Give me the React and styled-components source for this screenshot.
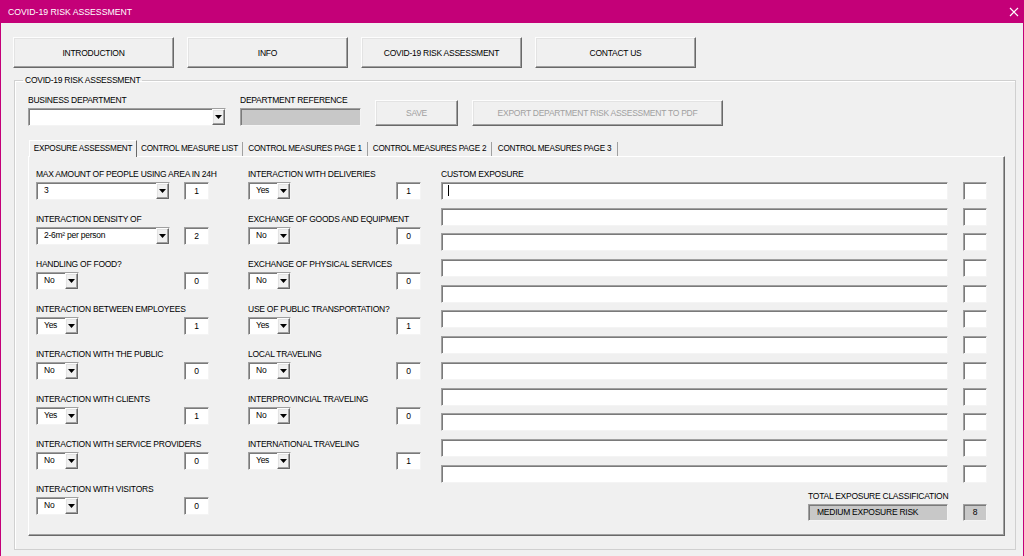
import React from "react";
import styled, { createGlobalStyle } from "styled-components";

const GlobalStyle = createGlobalStyle`
  html, body {
    margin: 0;
    padding: 0;
    background: #f0f0f0;
  }
  body {
    font-family: "Liberation Sans", Arial, sans-serif;
    font-size: 8.5px;
    letter-spacing: -0.25px;
    color: #000;
  }
  * {
    box-sizing: border-box;
  }
`;

const leftFields = [
  { label: "MAX AMOUNT OF PEOPLE USING AREA IN 24H", value: "3", score: "1", wide: true },
  { label: "INTERACTION DENSITY OF", value: "2-6m² per person", score: "2", wide: true },
  { label: "HANDLING OF FOOD?", value: "No", score: "0" },
  { label: "INTERACTION BETWEEN EMPLOYEES", value: "Yes", score: "1" },
  { label: "INTERACTION WITH THE PUBLIC", value: "No", score: "0" },
  { label: "INTERACTION WITH CLIENTS", value: "Yes", score: "1" },
  { label: "INTERACTION WITH SERVICE PROVIDERS", value: "No", score: "0" },
  { label: "INTERACTION WITH VISITORS", value: "No", score: "0" },
];

const midFields = [
  { label: "INTERACTION WITH DELIVERIES", value: "Yes", score: "1" },
  { label: "EXCHANGE OF GOODS AND EQUIPMENT", value: "No", score: "0" },
  { label: "EXCHANGE OF PHYSICAL SERVICES", value: "No", score: "0" },
  { label: "USE OF PUBLIC TRANSPORTATION?", value: "Yes", score: "1" },
  { label: "LOCAL TRAVELING", value: "No", score: "0" },
  { label: "INTERPROVINCIAL TRAVELING", value: "No", score: "0" },
  { label: "INTERNATIONAL TRAVELING", value: "Yes", score: "1" },
];

const tabs = [
  { name: "EXPOSURE ASSESSMENT", width: 108, active: true },
  { name: "CONTROL MEASURE LIST", width: 106 },
  { name: "CONTROL MEASURES PAGE 1", width: 125 },
  { name: "CONTROL MEASURES PAGE 2", width: 124 },
  { name: "CONTROL MEASURES PAGE 3", width: 126 },
];

const navButtons = ["INTRODUCTION", "INFO", "COVID-19 RISK ASSESSMENT", "CONTACT US"];

function Combo({ value, width }) {
  return (
    <ComboBox $width={width}>
      <ComboValue>{value}</ComboValue>
      <DropButton>
        <svg width="7" height="4" viewBox="0 0 7 4">
          <path d="M0 0 H7 L3.5 4 Z" fill="#000" />
        </svg>
      </DropButton>
    </ComboBox>
  );
}

function App() {
  return (
    <Window>
      <GlobalStyle />
      <TitleBar>
        <span>COVID-19 RISK ASSESSMENT</span>
        <svg width="10" height="10" viewBox="0 0 10 10">
          <path d="M1 1 L9 9 M9 1 L1 9" stroke="#fff" strokeWidth="1.2" />
        </svg>
      </TitleBar>
      <Body>
        <NavRow>
          {navButtons.map((b) => (
            <NavButton key={b}>{b}</NavButton>
          ))}
        </NavRow>
        <Group>
          <legend>COVID-19 RISK ASSESSMENT</legend>
          <DeptRow>
            <DeptField $width={198}>
              <Label>BUSINESS DEPARTMENT</Label>
              <Combo value="" width={198} />
            </DeptField>
            <DeptField $width={121}>
              <Label>DEPARTMENT REFERENCE</Label>
              <GreyBox $width={121} />
            </DeptField>
            <ActionButton $width={83} disabled>
              SAVE
            </ActionButton>
            <ActionButton $width={251} disabled>
              EXPORT DEPARTMENT RISK ASSESSMENT TO PDF
            </ActionButton>
          </DeptRow>

          <TabStrip>
            {tabs.map((t) => (
              <Tab key={t.name} $width={t.width} $active={t.active}>
                {t.name}
              </Tab>
            ))}
          </TabStrip>

          <TabPanel>
            <Column $width={173}>
              {leftFields.map((f) => (
                <Field key={f.label}>
                  <Label>{f.label}</Label>
                  <ControlRow>
                    <Combo value={f.value} width={f.wide ? 134 : 43} />
                    <ScoreBox>{f.score}</ScoreBox>
                  </ControlRow>
                </Field>
              ))}
            </Column>
            <Column $width={173}>
              {midFields.map((f) => (
                <Field key={f.label}>
                  <Label>{f.label}</Label>
                  <ControlRow>
                    <Combo value={f.value} width={43} />
                    <ScoreBox>{f.score}</ScoreBox>
                  </ControlRow>
                </Field>
              ))}
            </Column>
            <CustomColumn>
              <Label>CUSTOM EXPOSURE</Label>
              <CustomList>
                {Array.from({ length: 12 }).map((_, i) => (
                  <CustomRow key={i}>
                    <TextBox>{i === 0 && <Caret />}</TextBox>
                    <ScoreBox $width={24} />
                  </CustomRow>
                ))}
              </CustomList>
              <TotalBlock>
                <Label>TOTAL EXPOSURE CLASSIFICATION</Label>
                <TotalRow>
                  <GreyBox $width={140} $height={17}>
                    MEDIUM EXPOSURE RISK
                  </GreyBox>
                  <GreyBox $width={24} $height={17} $center>
                    8
                  </GreyBox>
                </TotalRow>
              </TotalBlock>
            </CustomColumn>
          </TabPanel>
        </Group>
      </Body>
    </Window>
  );
}

const Window = styled.div`
  width: 1024px;
  height: 556px;
  display: flex;
  flex-direction: column;
  background: #f0f0f0;
  border-left: 1px solid #c40078;
  border-right: 1px solid #c40078;
  overflow: hidden;
`;

const TitleBar = styled.div`
  height: 23px;
  flex: 0 0 23px;
  margin: 0 -1px;
  padding: 0 5px 0 8px;
  display: flex;
  align-items: center;
  justify-content: space-between;
  background: #c40078;
  color: #fff;
  font-size: 8.7px;
  letter-spacing: 0;
`;

const Body = styled.div`
  padding: 14px 7px 0 12px;
`;

const NavRow = styled.div`
  display: flex;
  gap: 13px;
`;

const raised = `
  background: #f0f0f0;
  border: 1px solid;
  border-color: #fdfdfd #696969 #696969 #fdfdfd;
  box-shadow: inset -1px -1px 0 #a0a0a0, inset 1px 1px 0 #e3e3e3;
`;

const sunken = `
  border: 1px solid;
  border-color: #a0a0a0 #f4f4f4 #f4f4f4 #a0a0a0;
  box-shadow: inset 1px 1px 0 #7a7a7a;
`;

const NavButton = styled.button`
  ${raised}
  width: 161px;
  height: 31px;
  padding: 0;
  font-family: inherit;
  font-size: 8.5px;
  letter-spacing: -0.25px;
  color: #000;
`;

const Group = styled.fieldset`
  margin: 6px 0 0 1px;
  padding: 0 10px 0 13px;
  height: 476px;
  border: 1px solid #d0d0d0;
  box-shadow: inset 1px 1px 0 #fff;
  min-width: 0;

  legend {
    margin-left: -5px;
    padding: 0 2px;
    line-height: 13px;
    font-size: 8.5px;
    color: #000;
  }
`;

const DeptRow = styled.div`
  margin-top: 7px;
  display: flex;
  align-items: flex-end;
  gap: 14px;
`;

const DeptField = styled.div`
  width: ${(p) => p.$width}px;
  flex: 0 0 auto;
`;

const Label = styled.div`
  height: 13px;
  line-height: 13px;
  font-size: 8.5px;
  white-space: nowrap;
  color: #000;
`;

const ComboBox = styled.div`
  ${sunken}
  width: ${(p) => p.$width}px;
  height: 18px;
  margin-top: 1px;
  display: flex;
  background: #fff;
`;

const ComboValue = styled.div`
  flex: 1;
  padding-left: 7px;
  line-height: 15px;
  font-size: 8.5px;
  white-space: nowrap;
  overflow: hidden;
`;

const DropButton = styled.div`
  ${raised}
  width: 13px;
  height: 16px;
  display: flex;
  align-items: center;
  justify-content: center;
`;

const GreyBox = styled.div`
  ${sunken}
  width: ${(p) => p.$width}px;
  height: ${(p) => p.$height || 18}px;
  margin-top: 1px;
  background: #c8c8c8;
  padding-left: ${(p) => (p.$center ? 0 : 8)}px;
  text-align: ${(p) => (p.$center ? "center" : "left")};
  line-height: 14px;
  font-size: 8.5px;
  white-space: nowrap;
`;

const ActionButton = styled.button`
  ${raised}
  width: ${(p) => p.$width}px;
  flex: 0 0 auto;
  height: 26px;
  padding: 0;
  font-family: inherit;
  font-size: 8.5px;
  letter-spacing: -0.25px;
  color: #a0a0a0;
`;

const TabStrip = styled.div`
  margin-top: 14px;
  height: 16px;
  padding-left: 1px;
  display: flex;
  align-items: flex-end;
`;

const Tab = styled.div`
  position: relative;
  z-index: ${(p) => (p.$active ? 2 : 1)};
  width: ${(p) => p.$width}px;
  height: ${(p) => (p.$active ? 17 : 14)}px;
  margin-bottom: ${(p) => (p.$active ? -1 : 0)}px;
  line-height: 13px;
  padding-top: ${(p) => (p.$active ? 1 : 0)}px;
  text-align: center;
  font-size: 8.2px;
  white-space: nowrap;
  background: #f0f0f0;
  border-top: ${(p) => (p.$active ? "1px solid #fff" : "none")};
  border-left: ${(p) => (p.$active ? "1px solid #fff" : "none")};
  border-right: 1px solid ${(p) => (p.$active ? "#696969" : "#a0a0a0")};
`;

const TabPanel = styled.div`
  position: relative;
  z-index: 1;
  width: 977px;
  height: 380px;
  padding: 11px 0 0 7px;
  display: flex;
  gap: 39px;
  border: 1px solid;
  border-color: #fff #696969 #696969 #fff;
  box-shadow: inset -1px -1px 0 #a0a0a0;
  background: #f0f0f0;
`;

const Column = styled.div`
  width: ${(p) => p.$width}px;
  display: flex;
  flex-direction: column;
`;

const Field = styled.div`
  margin-bottom: 13px;
`;

const ControlRow = styled.div`
  display: flex;
  justify-content: space-between;
  align-items: flex-start;
`;

const ScoreBox = styled.div`
  ${sunken}
  width: ${(p) => p.$width || 25}px;
  height: 18px;
  margin-top: 1px;
  background: #fff;
  text-align: center;
  line-height: 16px;
  font-size: 8.5px;
`;

const CustomColumn = styled.div`
  width: 546px;
  margin-left: -19px;
  display: flex;
  flex-direction: column;
`;

const CustomList = styled.div`
  display: flex;
  flex-direction: column;
  gap: 6.7px;
`;

const CustomRow = styled.div`
  display: flex;
  gap: 15px;
`;

const TextBox = styled.div`
  ${sunken}
  width: 507px;
  height: 18px;
  margin-top: 1px;
  padding: 2px 0 0 6px;
  background: #fff;
`;

const Caret = styled.span`
  display: block;
  width: 1px;
  height: 11px;
  background: #000;
`;

const TotalBlock = styled.div`
  align-self: flex-end;
  width: 179px;
  margin-top: 7px;
`;

const TotalRow = styled.div`
  display: flex;
  gap: 15px;
`;

export default App;
